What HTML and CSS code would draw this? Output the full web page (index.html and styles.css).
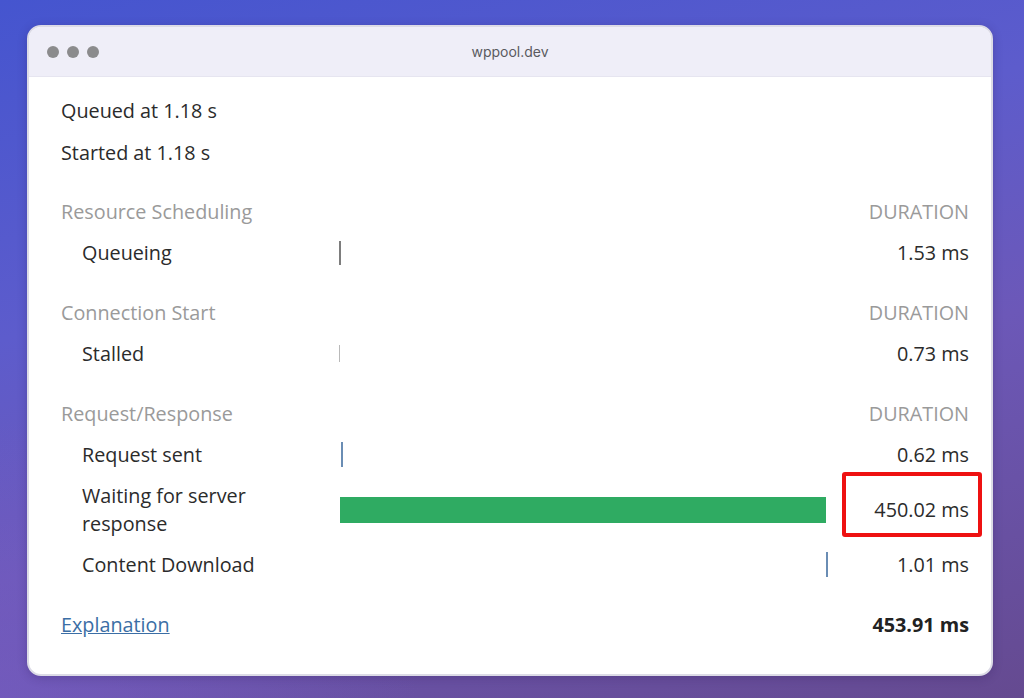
FILE: index.html
```html
<!DOCTYPE html>
<html lang="en">
<head>
<meta charset="utf-8">
<title>wppool.dev</title>
<link rel="stylesheet" href="styles.css">
</head>
<body>
<div class="window">
  <div class="titlebar">
    <div class="dots"><span></span><span></span><span></span></div>
    <div class="title">wppool.dev</div>
  </div>
  <div class="content">
    <div class="meta">Queued at 1.18 s</div>
    <div class="meta">Started at 1.18 s</div>

    <div class="section">
      <div class="row head"><div class="label">Resource Scheduling</div><div class="bar"></div><div class="value">DURATION</div></div>
      <div class="row"><div class="label sub">Queueing</div><div class="bar"><i class="tick grey" style="margin-left:0px"></i></div><div class="value">1.53 ms</div></div>
    </div>

    <div class="section">
      <div class="row head"><div class="label">Connection Start</div><div class="bar"></div><div class="value">DURATION</div></div>
      <div class="row"><div class="label sub">Stalled</div><div class="bar"><i class="tick light" style="margin-left:0px"></i></div><div class="value">0.73 ms</div></div>
    </div>

    <div class="section">
      <div class="row head"><div class="label">Request/Response</div><div class="bar"></div><div class="value">DURATION</div></div>
      <div class="row"><div class="label sub">Request sent</div><div class="bar"><i class="tick blue" style="margin-left:2px"></i></div><div class="value">0.62 ms</div></div>
      <div class="row"><div class="label sub">Waiting for server<br>response</div><div class="bar"><i class="fill" style="margin-left:1px;width:486px"></i></div><div class="value"><span class="highlight">450.02 ms</span></div></div>
      <div class="row"><div class="label sub">Content Download</div><div class="bar"><i class="tick blue" style="margin-left:487px"></i></div><div class="value">1.01 ms</div></div>
    </div>

    <div class="row footer"><div class="label"><a href="#">Explanation</a></div><div class="bar"></div><div class="value total">453.91 ms</div></div>
  </div>
</div>
</body>
</html>
```
FILE: styles.css
```css
html, body {
  margin: 0;
  padding: 0;
  height: 100%;
}
body {
  width: 1024px;
  height: 698px;
  overflow: hidden;
  background:
    radial-gradient(ellipse 600px 400px at 0% 100%, rgba(120, 95, 200, 0.55), rgba(120, 95, 200, 0) 70%),
    linear-gradient(165deg, #4555cf 0%, #5d5ccc 35%, #6c58b8 60%, #654a90 100%);
  font-family: "Open Sans", "Noto Sans", sans-serif;
  padding: 25px 31px 22px 27px;
  box-sizing: border-box;
}
.window {
  height: 651px;
  background: #ffffff;
  border: 2px solid #dcdbe6;
  border-radius: 14px;
  box-sizing: border-box;
  overflow: hidden;
  display: flex;
  flex-direction: column;
  box-shadow: 0 2px 10px rgba(40, 20, 80, 0.25);
}
.titlebar {
  height: 49px;
  flex: none;
  background: #efeef8;
  border-bottom: 1px solid #e6e5f0;
  display: flex;
  align-items: center;
  position: relative;
}
.dots {
  display: flex;
  gap: 8px;
  padding-left: 18px;
}
.dots span {
  width: 12px;
  height: 12px;
  border-radius: 50%;
  background: #8b8b8d;
}
.title {
  position: absolute;
  left: 0;
  right: 0;
  text-align: center;
  font-family: "Inter", "Liberation Sans", sans-serif;
  font-size: 14px;
  color: #5a5a5f;
  top: 16px;
}
.content {
  padding: 13px 22px 0 32px;
  color: #2b2b2b;
  font-size: 19.8px;
  line-height: 28px;
}
.meta {
  padding: 7px 0;
}
.section {
  margin-top: 17px;
}
.section + .section {
  margin-top: 19px;
}
.row {
  display: grid;
  grid-template-columns: 278px 496px 1fr;
  align-items: center;
  padding: 6.5px 0;
}
.head {
  color: #9a9a9a;
}
.sub {
  padding-left: 21px;
}
.value {
  text-align: right;
  white-space: nowrap;
}
.bar {
  display: flex;
  align-items: center;
  height: 28px;
}
.tick {
  display: block;
  width: 2px;
  height: 24px;
}
.tick.grey { background: #7d7d7d; }
.tick.light { width: 1px; height: 17px; background: #b9b9b9; }
.tick.blue { background: #6a8db4; width: 2px; height: 25px; }
.fill {
  display: block;
  height: 26px;
  background: #2fab62;
}
.highlight {
  display: inline-block;
  border: 4px solid #ee1111;
  border-radius: 3px;
  padding: 20px 9px 9px 28px;
  margin: -24px -13px -13px 0;
}
.footer {
  margin-top: 19px;
}
.footer a {
  color: #3b6ea5;
  text-decoration: underline;
}
.total {
  font-weight: 700;
  color: #222;
}
```
